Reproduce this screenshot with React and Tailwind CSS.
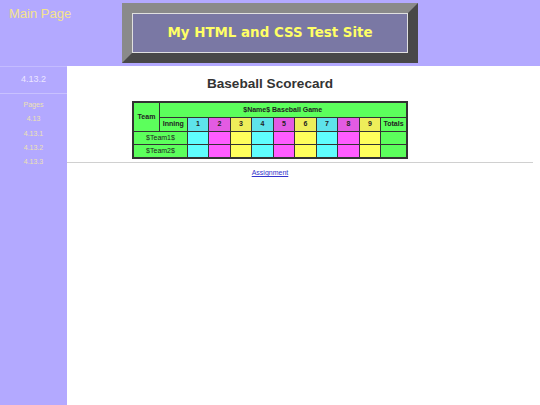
import React from 'react';

const innings = [1, 2, 3, 4, 5, 6, 7, 8, 9];
const headColor = ['bg-[#5ee3ea]', 'bg-[#e35be3]', 'bg-[#eeee5a]'];
const cellColor = ['bg-[#5ffefe]', 'bg-[#ff5cff]', 'bg-[#ffff5c]'];

function Scorecard() {
  const th = 'border border-[#333] font-bold text-[7px] leading-[8px] text-[#222]';
  return (
    <table className="border-2 border-[#333] border-collapse bg-[#5cff5c] font-['Liberation_Sans',Arial,sans-serif]">
      <tbody>
        <tr className="h-[15px]">
          <th rowSpan={2} className={th + ' w-[26px]'}>Team</th>
          <th colSpan={11} className={th}>$Name$ Baseball Game</th>
        </tr>
        <tr className="h-[14px]">
          <th className={th + ' w-[28px]'}>Inning</th>
          {innings.map((n, i) => (
            <th key={n} className={th + ' w-[21.5px] ' + headColor[i % 3]}>{n}</th>
          ))}
          <th className={th + ' w-[26px]'}>Totals</th>
        </tr>
        {['$Team1$', '$Team2$'].map((t) => (
          <tr key={t} className="h-[13.5px]">
            <td colSpan={2} className="border border-[#333] text-center text-[7px] leading-[8px] text-[#222]">{t}</td>
            {innings.map((n, i) => (
              <td key={n} className={'border border-[#333] ' + cellColor[i % 3]}></td>
            ))}
            <td className="border border-[#333]"></td>
          </tr>
        ))}
      </tbody>
    </table>
  );
}

export default function App() {
  return (
    <div className="w-[540px] h-[405px] bg-white flex flex-col font-['Liberation_Sans',Arial,sans-serif] overflow-hidden">
      <div className="h-[66px] bg-[#b3a9ff] flex shrink-0">
        <div className="w-[67px] shrink-0 pl-[9px] pt-[4px] text-[13px] text-[#f3e38c] whitespace-nowrap">Main Page</div>
        <div className="ml-[55px] mt-[3px] w-[296px] h-[60px] border-[10px] border-t-[#8a8a8a] border-l-[#8a8a8a] border-r-[#484848] border-b-[#484848]">
          <div className="h-full border border-[#e0e0e0] bg-[#7a78a4] flex items-center justify-center">
            <span className="font-['DejaVu_Sans',Verdana,sans-serif] font-bold text-[13.4px] text-[#ffff66]">My HTML and CSS Test Site</span>
          </div>
        </div>
      </div>
      <div className="flex flex-1">
        <div className="w-[67px] shrink-0 bg-[#b3a9ff] border-t border-[#c4bcff] flex flex-col">
          <div className="h-[27px] flex items-center justify-center text-[9px] text-[#ece6ff] border-b border-[#c8c1ff]">4.13.2</div>
          <div className="flex flex-col items-center pt-[6px] gap-[3.8px] text-[7px] text-[#eee2b0]">
            <span>Pages</span>
            <span>4.13</span>
            <span>4.13.1</span>
            <span>4.13.2</span>
            <span>4.13.3</span>
          </div>
        </div>
        <div className="flex-1 flex flex-col">
          <div className="pr-[67px] flex flex-col items-center">
            <h1 className="mt-[9px] text-[13.6px] font-bold text-[#333] leading-[18px]">Baseball Scorecard</h1>
            <div className="mt-[8px]">
              <Scorecard />
            </div>
          </div>
          <hr className="mt-[3px] mr-[7px] border-t border-[#d0d0d0]" />
          <div className="pr-[67px] flex justify-center mt-[5px]">
            <a href="#" className="text-[7px] text-[#3333cc] underline">Assignment</a>
          </div>
        </div>
      </div>
    </div>
  );
}
